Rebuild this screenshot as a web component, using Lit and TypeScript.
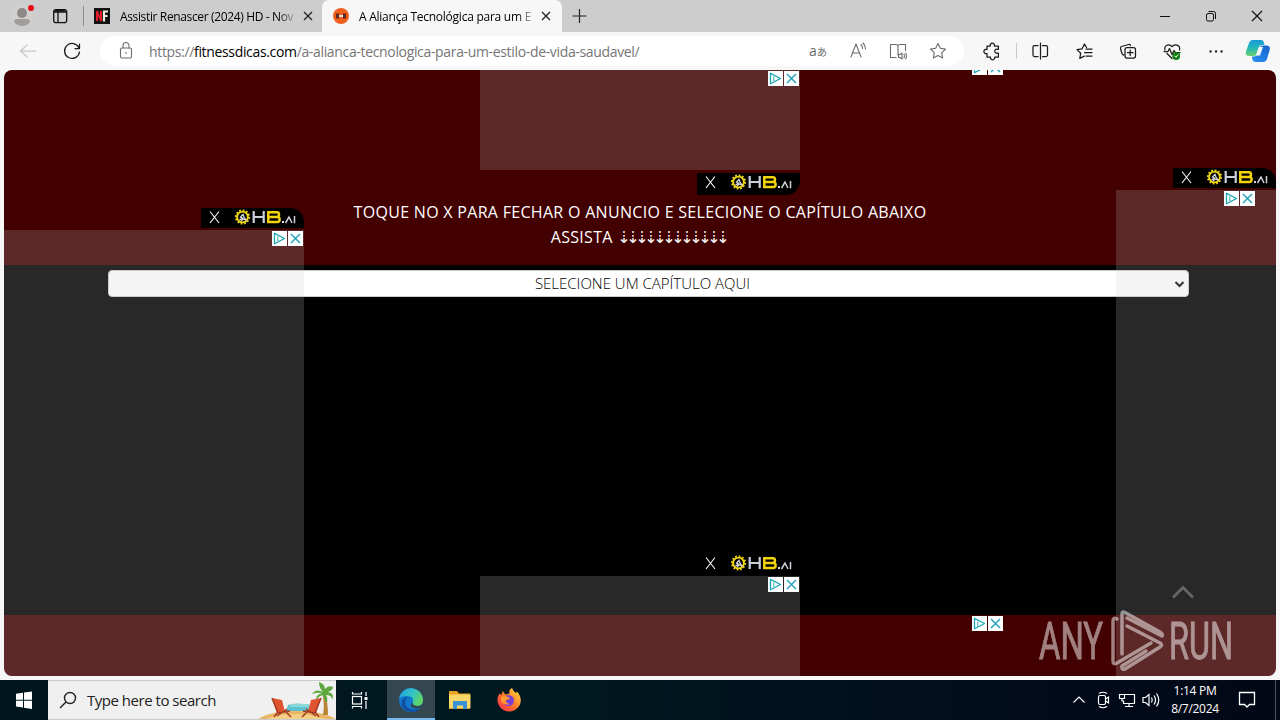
import { LitElement, html, css, svg } from "lit";
import { customElement, property } from "lit/decorators.js";

@customElement("ad-choices")
export class AdChoices extends LitElement {
  static styles = css`
    :host {
      display: flex;
      gap: 1px;
    }

    svg {
      display: block;
      background: #fff;
    }
  `;

  render() {
    return html`
      <svg width="15" height="15" fill="none" stroke="#1ba5b8" stroke-width="1.300">
        <path d="M2.500 2.300v10.500l10-5.300z" stroke-linejoin="round" />
        <path d="M5.700 5.500v5" stroke="#5fc0cd" />
      </svg>
      <svg width="15" height="15" fill="none" stroke="#2aa3bd" stroke-width="1.500">
        <path d="m3 3 9 9M12 3l-9 9" />
      </svg>
    `;
  }
}

@customElement("hb-badge")
export class HbBadge extends LitElement {
  static styles = css`
    :host {
      display: block;
      background: #000;
      overflow: hidden;
    }

    svg {
      display: block;
    }
  `;

  render() {
    return html`
      <svg width="103" height="20">
        <path d="m9 3.500 9 11.500M18 3.500 9 15" stroke="#fff" fill="none" stroke-width="1.100" />
        <circle cx="41.500" cy="9" r="6.700" fill="none" stroke="#e8cf16" stroke-width="1.800" stroke-dasharray="1.8 1.7" />
        <circle cx="41.500" cy="9" r="5.400" fill="none" stroke="#f2d90f" stroke-width="1.900" />
        <path d="m38.500 12 3-2-2-1 2.500-2.500 1 2.500 2 3-3-1-2 2" stroke="#d7d7df" fill="none" stroke-width="1.300" />
        <path d="M52.700 3v12M62.700 3v12M52.500 9h10" stroke="#cbd0dc" fill="none" stroke-width="2.200" />
        <path d="M67.300 4.200h8.700q2 0 2 2.300t-2 2.400h-8.700h9q2.300 0 2.300 2.500t-2.300 2.500h-9z" stroke="#f4d40c" fill="none" stroke-width="2.500" />
        <path d="M81 14h2" stroke="#ddd" stroke-width="2" />
        <path d="m84.500 15 3.500-6 3 6M93.500 8V15.300" stroke="#cfd2d8" fill="none" stroke-width="1.500" />
      </svg>
    `;
  }
}

@customElement("browser-tabs")
export class BrowserTabs extends LitElement {
  static styles = css`
    :host {
      display: flex;
      height: 32px;
      background: #cdcdcd;
      font: 12px "Open Sans", sans-serif;
      color: #000;
    }

    svg {
      display: block;
      flex: none;
    }

    .profile {
      width: 38px;
      padding-left: 6px;
    }

    .workspaces {
      width: 39px;
    }

    .tab {
      display: flex;
      align-items: center;
      width: 239px;
      box-sizing: border-box;
      padding: 0 6px 0 10px;
    }

    .first {
      border-left: 1px solid #8d8d8d;
      border-image: linear-gradient(transparent 20%, #8d8d8d 20%, #8d8d8d 80%, transparent 80%) 1;
    }

    .active {
      width: 240px;
      padding-right: 8px;
      padding-left: 11px;
      background: #f7f7f7;
      border-radius: 7px 7px 0 0;
    }

    .title {
      flex: 1;
      margin: 0 0 0 10px;
      white-space: nowrap;
      letter-spacing: -0.25px;
      mask-image: linear-gradient(90deg, #000 158px, rgba(0, 0, 0, 0.2) 174px);
    }

    .first .title {
      letter-spacing: -0.36px;
    }

    .plus {
      width: 34px;
    }

    .spacer {
      flex: 1;
    }
  `;

  private _close() {
    return html`
      <svg width="16" height="16" fill="none" stroke="#222" stroke-width="1.300">
        <path d="m4 4 8 8M12 4l-8 8" />
      </svg>
    `;
  }

  render() {
    return html`
      <div class="profile">
        <svg width="32" height="32">
          <circle cx="16" cy="16" r="11" fill="#d2d0ce" />
          <circle cx="16" cy="13" r="5" fill="#8c8a88" />
          <path d="M8 22q0-3 3-3h10q3 0 3 3-3 4-8 4t-8-4z" fill="#a09e9c" />
          <circle cx="25" cy="8" r="3" fill="#e80a12" />
        </svg>
      </div>
      <div class="workspaces">
        <svg width="32" height="32" fill="none" stroke="#111" stroke-width="1.300">
          <rect x="9.700" y="9.700" width="13" height="13" rx="2.500" />
          <path d="M9.500 12h13.200M14 12v10.500" />
          <path d="M11 10.500h10" stroke-width="2" />
        </svg>
      </div>
      <div class="tab first">
        <svg width="16" height="16">
          <rect width="16" height="16" fill="#101312" />
          <path d="M3 13V3l4 10V3" stroke="#e01b2c" stroke-width="2" fill="none" />
          <path d="M10 13.500V3.500h4M10 8h3.500" stroke="#f4e9df" stroke-width="2.200" fill="none" />
        </svg>
        <span class="title">Assistir Renascer (2024) HD - Nov</span>
        ${this._close()}
      </div>
      <div class="tab active">
        <svg width="16" height="16">
          <circle cx="8" cy="8" r="8" fill="#f0601f" />
          <path d="M4.500 5.500v5M11.500 5.500v5" stroke="#5b2a21" stroke-width="3.200" />
          <path d="M6 8h4" stroke="#ddd" stroke-width="2" />
        </svg>
        <span class="title">A Aliança Tecnológica para um E</span>
        ${this._close()}
      </div>
      <svg class="plus" width="34" height="32" fill="none" stroke="#222" stroke-width="1.200">
        <path d="M17.500 9v14M10.500 16h14" />
      </svg>
      <div class="spacer"></div>
      <svg width="46" height="32" stroke="#111"><path d="M18 16.500h10" /></svg>
      <svg width="46" height="32" fill="none" stroke="#111">
        <rect x="18.500" y="13.500" width="7" height="7.500" rx="1.500" />
        <path d="M20.500 11.500h5q2 0 2 2v5.500" />
      </svg>
      <svg width="46" height="32" fill="none" stroke="#111" stroke-width="1.200">
        <path d="m18 11 10 10M28 11 18 21" />
      </svg>
    `;
  }
}

@customElement("browser-toolbar")
export class BrowserToolbar extends LitElement {
  static styles = css`
    :host {
      display: flex;
      align-items: center;
      height: 38px;
      background: #f7f7f7;
      font-family: "Open Sans", sans-serif;
    }

    svg {
      display: block;
      flex: none;
      fill: none;
      stroke: #1b1b1b;
      stroke-width: 1.25;
      stroke-linejoin: round;
      stroke-linecap: round;
    }

    .nav {
      display: flex;
      width: 94px;
      padding-left: 6px;
    }

    .nav .back {
      stroke: #c8c8c8;
    }

    .address {
      display: flex;
      align-items: center;
      width: 864px;
      height: 30px;
      border-radius: 15px;
      background: #fff;
    }

    .address svg {
      stroke: #6c6c6c;
      stroke-width: 1.1;
    }

    .address .lock {
      margin-left: 4px;
    }

    .url {
      flex: 1;
      margin-left: 1px;
      font-size: 14px;
      color: #767676;
      white-space: nowrap;
      letter-spacing: -0.34px;
    }

    .url b {
      font-weight: 400;
      color: #000;
    }

    .translate {
      width: 40px;
      text-align: center;
      font-size: 14px;
      line-height: 20px;
      color: #6c6c6c;
      white-space: nowrap;
    }

    .translate small {
      font: 10px "Noto Sans CJK JP", sans-serif;
      line-height: 1;
    }

    .actions {
      display: flex;
      align-items: center;
      padding-left: 6px;
    }

    .divider {
      width: 1px;
      height: 16px;
      margin: 0 1px 0 2px;
      background: #c8c8c8;
    }

    .check {
      fill: #138013;
      stroke: #138013;
    }

    .tick {
      stroke: #fff;
      stroke-width: 1;
    }

    .dots {
      stroke-width: 2.3;
    }

    .copilot path {
      stroke: none;
    }
  `;

  render() {
    return html`
      <div class="nav">
        <svg class="back" width="44" height="38">
          <path d="M30 19H15M21 13l-6.500 6 6.500 6" />
        </svg>
        <svg width="44" height="38">
          <path d="M29 16a7.500 7.500 0 1 0 .5 4M29.500 12v4.500H25" />
        </svg>
      </div>
      <div class="address">
        <svg class="lock" width="44" height="30">
          <rect x="16.500" y="12" width="11" height="10" rx="1.500" />
          <path d="M19 12v-2.500a3 3 0 0 1 6 0V12M22 16.500v1" />
        </svg>
        <span class="url">https://<b>fitnessdicas.com</b>/a-alianca-tecnologica-para-um-estilo-de-vida-saudavel/</span>
        <span class="translate">a<small>あ</small></span>
        <svg width="40" height="30">
          <path d="m13 21 5-13 5 13M14.800 17h6.500M23 8.500q1.500 1.500 1.500 4M25 7q2.500 2.500 2.500 6" />
        </svg>
        <svg width="40" height="30">
          <path d="M18 21.500h-5.500v-13H18q2 0 2 1.500v8M20 10q0-1.500 2-1.500h5.500v6M20 10v9" />
          <path d="M20.500 18.500v3h1.500l2 1.500v-6l-2 1.500zM26 18q1 2 0 4M27.800 17q1.500 3 0 6" />
        </svg>
        <svg width="46" height="30">
          <path d="m20 7.500 2.300 4.800 5.200.8-3.800 3.700.9 5.200-4.600-2.500-4.600 2.500.9-5.200-3.800-3.700 5.200-.8z" />
        </svg>
      </div>
      <div class="actions">
        <svg width="44" height="38">
          <path d="M17 14h3.200a2.200 2.200 0 1 1 4.200 0h4v3.300h-1a2 2 0 1 0 0 3.800h1v3.900h-3.700a2.200 2.200 0 1 1-4.200 0H17v-3.500a2.200 2.200 0 1 1 0-4z" />
        </svg>
        <div class="divider"></div>
        <svg width="44" height="38">
          <path d="M20 13.500h-3.500q-1.500 0-1.500 1.500v8q0 1.500 1.500 1.500H20M24.500 13.500H28q1.500 0 1.500 1.500v8q0 1.500-1.500 1.500h-3.500M22.500 11v16" />
        </svg>
        <svg width="44" height="38">
          <path d="m24.500 15.500-2-3.500-2.400 4.800-5.100.8 3.700 3.600-.9 5.200 4.500-2.300M24 17h6M22.500 20.500H30M24 24h6" />
        </svg>
        <svg width="44" height="38">
          <path d="M18 23q-1.500 0-2-1.500l-1.500-5Q14 15 15.500 14.500l7-2q1.500-.5 2 1" />
          <rect x="19" y="15.500" width="10.500" height="10.500" rx="2" />
          <path d="M24.200 18v5.500M21.500 20.700h5.500" />
        </svg>
        <svg width="44" height="38">
          <path d="M15 18q-1-3.500 2-4.800 3-1 5 1.500 2-2.500 5-1.500 3.500 1.300 2.500 4.800M14 19.500h4l1.500-3 2.500 6 2-4 1.500 2h4.500M17 21.500l5 5" />
          <circle class="check" cx="26.200" cy="24" r="3.300" />
          <path class="tick" d="m24.700 24 1.200 1.200 2-2.200" />
        </svg>
        <svg width="44" height="38">
          <path class="dots" d="M16.500 19.500h.1M22 19.500h.1M27.500 19.500h.1" />
        </svg>
        <svg class="copilot" width="39" height="38">
          <defs>
            <linearGradient id="a" x1="0" y1="0" x2="0" y2="1">
              <stop offset="0" stop-color="#1698d8" />
              <stop offset=".5" stop-color="#25b8b8" />
              <stop offset="1" stop-color="#6bd26c" />
            </linearGradient>
            <linearGradient id="b" x1="1" y1="0" x2="0" y2="1">
              <stop offset="0" stop-color="#1560c8" />
              <stop offset="1" stop-color="#2a94f5" />
            </linearGradient>
          </defs>
          <path d="M15 8h8q2.500 0 3 3l.5 2h-2q-3 0-4 3l-2 6q-.7 2-2.500 2h-4Q6.500 24 8 19.500l3-8.500q1-3 4-3z" fill="url(#a)" />
          <path d="M26 13.500h2q5 0 3.500 5l-2.500 8.500q-1 3-4 3h-7.500q-2.500 0-3.200-3l-.5-2.500h2q3 0 4-3l2-6q.7-2 4.200-2z" fill="url(#b)" />
          <path d="M21 15h4l-3 8.500h-4z" fill="#f7f7f7" />
        </svg>
      </div>
    `;
  }
}

@customElement("web-page")
export class WebPage extends LitElement {
  static styles = css`
    :host {
      display: flex;
      flex-direction: column;
      position: relative;
      height: 606px;
      margin: 0 4px 4px;
      border-radius: 8px;
      overflow: hidden;
      background: #420000;
      font-family: "Open Sans", sans-serif;
    }

    .hero {
      height: 195px;
      box-sizing: border-box;
      padding-top: 130px;
      text-align: center;
      color: #fff;
      font-size: 16px;
      line-height: 25px;
      font-weight: 500;
      letter-spacing: 0.3px;
      white-space: nowrap;
    }

    .arrows {
      font: 16px "DejaVu Sans", sans-serif;
      letter-spacing: -4.4px;
      margin-right: 4px;
    }

    .content {
      height: 350px;
      box-sizing: border-box;
      padding: 5px 87px 0 104px;
      background: #000;
    }

    .select {
      display: flex;
      align-items: center;
      height: 27px;
      box-sizing: border-box;
      border: 1px solid #ccc;
      border-radius: 4px;
      background: #fff;
      color: #000;
      font-size: 15px;
      font-weight: 300;
    }

    .select span {
      flex: 1;
      padding: 0 0 2px 2px;
      text-align: center;
    }

    .select svg {
      margin-right: 3px;
    }

    .ad {
      position: absolute;
      background: rgba(200, 200, 200, 0.2);
    }

    .ad.top {
      left: 476px;
      top: 0;
      width: 320px;
      height: 100px;
    }

    .ad.bottom {
      left: 476px;
      bottom: 0;
      width: 320px;
      height: 100px;
    }

    .ad.left {
      left: 0;
      top: 160px;
      width: 300px;
      bottom: 0;
    }

    .ad.right {
      right: 0;
      top: 120px;
      width: 160px;
      bottom: 0;
    }

    .ad ad-choices {
      position: absolute;
      top: 1px;
      right: 1px;
    }

    .ad.right ad-choices {
      right: 21px;
    }

    .ad hb-badge {
      position: absolute;
      right: 0;
      top: -22px;
      width: 103px;
      height: 20px;
      border-radius: 0 14px 0 0;
    }

    .ad.top hb-badge {
      top: 103px;
      height: 22px;
      border-radius: 0 0 14px 0;
    }

    .loose {
      position: absolute;
      left: 968px;
      top: -10px;
    }

    .loose.low {
      top: 546px;
    }

    .to-top {
      position: absolute;
      right: 82px;
      bottom: 77px;
    }

    .watermark {
      position: absolute;
      right: 31px;
      bottom: 2px;
      opacity: 0.5;
      font-family: "Roboto", sans-serif;
    }
  `;

  render() {
    return html`
      <div class="hero">
        <div class="line">TOQUE NO X PARA FECHAR O ANUNCIO E SELECIONE O CAPÍTULO ABAIXO</div>
        <div class="line">ASSISTA <span class="arrows">${"⇣".repeat(12)}</span></div>
      </div>
      <div class="content">
        <div class="select">
          <span>SELECIONE UM CAPÍTULO AQUI</span>
          <svg width="11" height="10" fill="none" stroke="#111" stroke-width="2">
            <path d="m1.500 3 4 4 4-4" />
          </svg>
        </div>
      </div>
      ${["top", "left", "right", "bottom"].map(
        (side) => html`
          <div class="ad ${side}">
            <ad-choices></ad-choices>
            <hb-badge></hb-badge>
          </div>
        `,
      )}
      <ad-choices class="loose"></ad-choices>
      <ad-choices class="loose low"></ad-choices>
      <svg class="to-top" width="22" height="14" fill="none" stroke="#666" stroke-width="2.800">
        <path d="m1 12.500 10-10 10 10" />
      </svg>
      <svg class="watermark" width="210" height="70" fill="#fff">
        <g stroke="#fff" stroke-width="0.900">
          <text x="4" y="55" font-size="51" textLength="64" lengthAdjust="spacingAndGlyphs">ANY</text>
          <text x="134" y="55" font-size="51" textLength="64" lengthAdjust="spacingAndGlyphs">RUN</text>
        </g>
        <g
          transform="translate(0 4)"
          fill="none"
          stroke="#fff"
          stroke-width="3.500"
          stroke-linejoin="round"
          stroke-linecap="round"
        >
          <path d="M87 46V6q0-3 3-1.500l35 19.500q3 2 2 4L92 10" />
          <path d="M82 11q-4-2-4 2v40q0 4 4 2l34-20" />
          <path d="M92 18l33 17q3 2 0 4L90 61q-4 1-3-3l24-15" />
        </g>
      </svg>
    `;
  }
}

@customElement("task-bar")
export class TaskBar extends LitElement {
  @property({ type: String })
  time = "1:14 PM";

  @property({ type: String })
  date = "8/7/2024";

  static styles = css`
    :host {
      display: flex;
      height: 40px;
      background: linear-gradient(90deg, #00161f, #001820 45%, #020a1a 85%, #020815);
      font-family: "Open Sans", sans-serif;
    }

    svg {
      display: block;
      flex: none;
    }

    .search {
      display: flex;
      align-items: center;
      width: 288px;
      box-sizing: border-box;
      border: 1px solid #c9cccd;
      border-width: 1px 0;
      background: #f0f0f0;
      color: #222;
      font-size: 15px;
    }

    .search span {
      flex: 1;
      white-space: nowrap;
      letter-spacing: -0.48px;
    }

    .app {
      width: 48px;
      height: 40px;
      margin-right: 1px;
    }

    .view {
      margin: 0 4px 0 -1px;
    }

    .open {
      box-sizing: border-box;
      background: #34464f;
      border-bottom: 2px solid #76b9ed;
    }

    .spacer {
      flex: 1;
    }

    .tray {
      display: flex;
    }

    .clock {
      width: 64px;
      text-align: center;
      color: #fff;
      font-size: 12px;
      line-height: 18px;
      padding-top: 2px;
      letter-spacing: -0.3px;
    }

    .show-desktop {
      width: 4px;
      border-left: 1px solid #4b525c;
    }
  `;

  private _chair(x: number, flip: boolean) {
    return svg`
      <g transform="translate(${x} 16) scale(${flip ? -1 : 1} 1)">
        <path d="M0 1 10 3l3 12-8 1z" fill="#e0532f" />
        <path d="m0 1 6 15 12-2M5 19l10-7M6 15l-4 5M13 14l6 6" fill="none" stroke="#a33c22" stroke-width="1.500" />
      </g>
    `;
  }

  render() {
    return html`
      <svg width="48" height="40" fill="#fff">
        <path d="m16 13.800 7-1v7h-7zM24 12.600l8-1.100v8.300h-8zM16 20.800h7v6.800l-7-1zM24 20.800h8V29l-8-1.200z" />
      </svg>
      <div class="search">
        <svg width="39" height="38" fill="none" stroke="#222" stroke-width="1.400">
          <circle cx="22" cy="17" r="5.500" />
          <path d="m18 21-6 6" />
        </svg>
        <span>Type here to search</span>
        <svg width="80" height="38">
          <path d="M2 38q12-8 38-8t40 8z" fill="#e9b565" />
          <path d="M10 38q14-5 30-5t30 5z" fill="#f3cf86" />
          <path d="M32 24q8-3 22 0l2 6H30z" fill="#5ec3cf" />
          <path d="M34 23h19v3H34z" fill="#8ad9d6" />
          <path d="M67 34q2-12-1-22h3q3 10 3 22z" fill="#b98537" />
          <path d="M67 11q-7-4-11 2 6-2 10-1-7 2-6 8 2-5 7-6 1 5 4 8 1-5-1-8 6 0 6 5 3-7-4-8 5-2 5-5-5-2-8 2 0-5-6-7 0 6 4 10z" fill="#5da83f" />
          ${this._chair(16, false)} ${this._chair(65, true)}
        </svg>
      </div>
      <svg class="app view" viewBox="0 0 48 40" fill="none" stroke="#fff" stroke-width="1.200">
        <rect x="17.500" y="16.500" width="9" height="7.500" />
        <path d="M17.500 12v2h9v-2M17.500 28.500v-2h9v2M31 12v4M31 21v8" />
        <path d="M29.500 18.500h3" stroke-width="3" />
      </svg>
      <div class="app open">
        <svg width="48" height="38">
          <defs>
            <linearGradient id="e" x1="0" y1="0" x2="1" y2=".4">
              <stop offset="0" stop-color="#1d9fe0" />
              <stop offset=".6" stop-color="#35c5c5" />
              <stop offset="1" stop-color="#5fd365" />
            </linearGradient>
          </defs>
          <circle cx="24" cy="20" r="12" fill="#1378cd" />
          <path d="M12.200 18A12 12 0 0 1 36 20q0 6-6 6-5 0-4-4 1-6-6-6-5 0-7.800 2z" fill="url(#e)" />
          <path d="M20 16.500q-4 6 0 10.500 5 5 13 1-4 6-13 3-7-4-5-10 1-3 5-4.500z" fill="#124f9f" />
          <path d="M25.500 23q1 3 5 3 3.500 0 5.200-2.500l-2 4q-6 2-9.500-.5-1-3 1.300-4z" fill="#34464f" />
        </svg>
      </div>
      <svg class="app" viewBox="0 0 48 40">
        <path d="M13 11h8l2 2.500h11V29H13z" fill="#e9a324" />
        <path d="M13 14.500h21.500V28H13z" fill="#fbd768" />
        <path d="M17 21h14v8h-4v-3.500h-6V29h-4z" fill="#3b93d6" />
      </svg>
      <svg class="app" viewBox="0 0 48 40">
        <defs>
          <linearGradient id="f" x1="1" y1="0" x2="0" y2="1">
            <stop offset="0" stop-color="#ffe63c" />
            <stop offset=".5" stop-color="#ff7a2a" />
            <stop offset="1" stop-color="#f0244f" />
          </linearGradient>
        </defs>
        <path d="M24 31.500a11.500 11.500 0 0 1-11-15l1.500-3 2 1.500 1-4 3 3.500 4-1q-1-4 2.500-5.500 1 3 4 5l1-1.500q6 7 2.500 14-4 6-10.500 6z" fill="url(#f)" />
        <circle cx="23.500" cy="20.500" r="5.500" fill="#7a3fd4" />
        <path d="M16 17q4-2 7 0l2 1q-1 2-4 2-1 3 4 4-6 2-9-3z" fill="#ff9a2c" />
      </svg>
      <div class="spacer"></div>
      <div class="tray">
        <svg width="24" height="40" fill="none" stroke="#fff" stroke-width="1.200">
          <path d="m6.500 22.500 5.500-5.500 5.500 5.500" />
        </svg>
        <svg width="24" height="40" fill="none" stroke="#fff" stroke-width="1.200">
          <rect x="7.500" y="15.500" width="7" height="9" rx="1.500" />
          <path d="m14.500 19 3-2v6l-3-2M8 13.500q4-2.500 8 0M8 26.500q4 2.500 8 0" />
        </svg>
        <svg width="24" height="40" fill="none" stroke="#fff" stroke-width="1.200">
          <path d="M10 14.500h9.500v9H8.500v-3M14 23.500v3M10 26.500h8M4.500 14.500h5v4h-5zM7 18.500v2.500h1.500" />
        </svg>
        <svg width="24" height="40" fill="none" stroke="#fff" stroke-width="1.200">
          <path d="M4 17.500h2.500l3.500-3v11l-3.500-3H4zM12.500 17.500q1.500 2.500 0 5M15 15.500q3 4.500 0 9M17.500 13.500q4.500 6.500 0 13" />
        </svg>
      </div>
      <div class="clock">
        <div>${this.time}</div>
        <div>${this.date}</div>
      </div>
      <svg width="48" height="40" fill="none" stroke="#fff" stroke-width="1.300">
        <path d="M12.500 12.500h15v12h-5L20 27l-2.500-2.500h-5z" />
      </svg>
      <div class="show-desktop"></div>
    `;
  }
}

@customElement("app-root")
export class AppRoot extends LitElement {
  static styles = css`
    :host {
      display: block;
      width: 1280px;
      height: 720px;
      overflow: hidden;
      background: #f7f7f7;
    }
  `;

  render() {
    return html`
      <browser-tabs></browser-tabs>
      <browser-toolbar></browser-toolbar>
      <web-page></web-page>
      <task-bar></task-bar>
    `;
  }
}

declare global {
  interface HTMLElementTagNameMap {
    "app-root": AppRoot;
  }
}
